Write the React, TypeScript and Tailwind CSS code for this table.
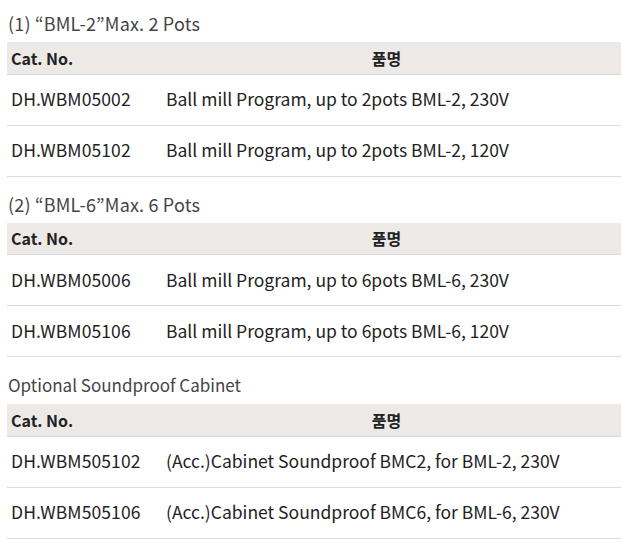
import React from 'react';

interface Row {
    cat: string;
    name: string;
}

interface Section {
    title: string;
    rows: Row[];
    small?: boolean;
}

const sections: Section[] = [
    {
        title: '(1) “BML-2”Max. 2 Pots',
        rows: [
            { cat: 'DH.WBM05002', name: 'Ball mill Program, up to 2pots BML-2, 230V' },
            { cat: 'DH.WBM05102', name: 'Ball mill Program, up to 2pots BML-2, 120V' },
        ],
    },
    {
        title: '(2) “BML-6”Max. 6 Pots',
        rows: [
            { cat: 'DH.WBM05006', name: 'Ball mill Program, up to 6pots BML-6, 230V' },
            { cat: 'DH.WBM05106', name: 'Ball mill Program, up to 6pots BML-6, 120V' },
        ],
    },
    {
        title: 'Optional Soundproof Cabinet',
        small: true,
        rows: [
            { cat: 'DH.WBM505102', name: '(Acc.)Cabinet Soundproof BMC2, for BML-2, 230V' },
            { cat: 'DH.WBM505106', name: '(Acc.)Cabinet Soundproof BMC6, for BML-6, 230V' },
        ],
    },
];

export default function App() {
    return (
        <div
            className="w-[622px] bg-white pl-[7px] pr-[1px] pt-[11px] text-[#222]"
            style={{ fontFamily: '"Noto Sans CJK KR", "Noto Sans", sans-serif' }}
        >
            {sections.map((s, i) => (
                <div key={i} className={i === 0 ? '' : i === 1 ? 'pt-[15px]' : 'pt-[17px]'}>
                    <div
                        className={
                            s.small
                                ? 'pl-[1px] pb-[8px] text-[17px] leading-[22px] text-[#444]'
                                : 'pl-[1px] pb-[7px] text-[18px] leading-[24px] text-[#444] tracking-[0.2px]'
                        }
                    >
                        {s.title}
                    </div>
                    <table className="w-full border-collapse">
                        <thead>
                            <tr className="bg-[#ece9e6] border-b border-[#d9d9d9]">
                                <th className="w-[145px] h-[32px] pl-[4px] text-left font-bold text-[16px]">Cat. No.</th>
                                <th className="h-[32px] text-center font-bold text-[16px]">품명</th>
                            </tr>
                        </thead>
                        <tbody>
                            {s.rows.map((r, j) => (
                                <tr key={j} className="border-b border-[#dcdcdc]">
                                    <td className="h-[51px] pl-[4px] text-[17.5px] tracking-[0.1px] whitespace-nowrap">{r.cat}</td>
                                    <td className="h-[51px] pl-[14px] text-[17.5px] whitespace-nowrap">{r.name}</td>
                                </tr>
                            ))}
                        </tbody>
                    </table>
                </div>
            ))}
        </div>
    );
}
